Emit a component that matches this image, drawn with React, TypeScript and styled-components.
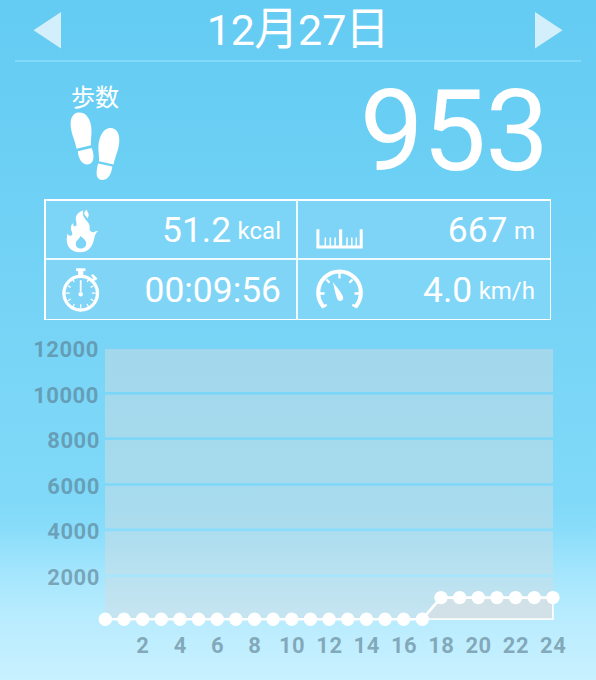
import React from "react";
import styled, { createGlobalStyle } from "styled-components";

const GlobalStyle = createGlobalStyle`
  *, *::before, *::after { box-sizing: border-box; }
  body { margin: 0; overflow: hidden; }
`;

const Screen = styled.main`
  width: 596px;
  height: 680px;
  display: flex;
  flex-direction: column;
  overflow: hidden;
  color: #fff;
  font-family: Roboto, "Noto Sans CJK JP", sans-serif;
  background: linear-gradient(
    180deg,
    #64cbf2 0px,
    #6bcff4 150px,
    #77d4f6 320px,
    #80d9f8 500px,
    #87dcfa 525px,
    #a2e5fd 570px,
    #b6ebfe 610px,
    #c9f1ff 680px
  );
`;

const DateBar = styled.header`
  display: flex;
  align-items: center;
  justify-content: space-between;
  height: 62px;
  margin: 0 15px;
  padding: 0 18px;
  border-bottom: 2px solid #80d9fb;
`;

const ArrowButton = styled.button`
  display: flex;
  padding: 0;
  border: 0;
  background: none;
  color: #d3effb;
`;

const DateTitle = styled.h1`
  margin: 0;
  font-size: 43px;
  font-weight: 400;
  line-height: 58px;
  white-space: nowrap;
`;

const Kanji = styled.span`
  display: inline-block;
  line-height: 50px;
  transform: translateY(-1px) scale(1.03, 1.06);
`;

const StepsRow = styled.section`
  display: flex;
  justify-content: space-between;
  height: 137px;
  padding: 20px 48px 0 70px;
`;

const StepsLabel = styled.div`
  display: flex;
  flex-direction: column;
  font-size: 24px;
  line-height: 30px;
`;

const LabelText = styled.span`
  height: 30px;
  padding: 1px 0 0 1px;
`;

const StepsValue = styled.div`
  margin-top: -17px;
  font-size: 113.5px;
  line-height: 134px;
  letter-spacing: -1px;
`;

const StatsGrid = styled.section`
  display: grid;
  grid-template-columns: 250px 252px;
  grid-template-rows: 57px 59px;
  gap: 2px;
  width: 507px;
  height: 121px;
  margin-left: 44px;
  border: 2px solid rgba(255, 255, 255, 0.93);
  background: rgba(255, 255, 255, 0.88);
`;

const StatCell = styled.div<{ $tone: string }>`
  display: flex;
  align-items: center;
  justify-content: space-between;
  padding: 0 15px 0 16px;
  background: ${(p) => p.$tone};
`;

const StatText = styled.div`
  display: flex;
  align-items: baseline;
  font-size: 35.4px;
  line-height: 42px;
  white-space: nowrap;
`;

const Unit = styled.span`
  margin: 0 0 0 6.5px;
  font-size: 24px;
  line-height: 24px;
  transform: translateY(-3.5px);
`;

const Chart = styled.svg`
  display: block;
  flex: 1;
  width: 596px;
  font-family: Roboto, sans-serif;
  font-size: 22px;
  font-weight: 700;
  letter-spacing: 0.5px;
`;

function Arrow({ flip }: { flip?: boolean }) {
  return (
    <svg width="28" height="37" viewBox="0 0 28 37" fill="currentColor">
      <path d={flip ? "M0 0 27.5 18.2 0 36.5Z" : "M28 0V36.5L.5 18.2Z"} />
    </svg>
  );
}

function Footprints() {
  return (
    <svg width="50" height="70" viewBox="0 0 50 70" fill="#fff">
      <path d="M8.5.6C15 .1 19 5 20.7 12C22.4 19 20.8 26 20.9 33.2L6.6 36.7C5.4 29.5.7 21 .6 12.5C.5 6 3.2.9 8.5.6Z" />
      <path d="M7.8 39.2 21.6 35.9C23.2 39 23.7 43 23.4 46C23 50 20.5 52.6 17 52.4C11.4 52.2 8.4 46 7.8 39.2Z" />
      <path d="M41.3 16C46.8 16.6 49.6 22 49.3 29C49.1 37 45 45 43.6 52.4L29 49.3C29.5 42.5 27.2 36 29.2 28.5C31.1 20.6 35.6 15.3 41.3 16Z" />
      <path d="M28.2 51.5 42.3 54.6C41.7 61 38.6 68.2 32.5 68C28.6 67.9 26.4 65 26.6 61C26.7 57.5 27.2 54.2 28.2 51.5Z" />
    </svg>
  );
}

function Flame() {
  return (
    <svg width="42" height="48" viewBox="0 1 42 48">
      <path
        fill="#fff"
        fillRule="evenodd"
        d="M21.3 5.3C19.7 10.8 23.3 14.2 26.1 17.5C27.9 20 28 22.5 27.5 24.5C28.7 27 30.5 27.8 32.2 26.9C33.6 26.1 34.7 25.7 36.2 26C33.9 27.7 33 29.8 32.3 33C30.8 41.5 26.7 47.1 18.2 47.2C9 47.3 4.7 41.4 4.7 34.8C4.7 32.6 5.6 31 4.9 28C5.9 29.8 7 31 8.6 30.8C10.6 30.6 10.8 28.5 9.6 26.2C8.2 23.4 8.6 20 11.2 18C10.9 21 12.4 21.9 13.8 21C15.7 19.6 13.7 16.6 13.8 13.4C14 9.7 16.9 7 21.3 5.3ZM18.3 31C17.7 34 13.8 35 13.8 39C13.8 41.8 16 43.6 19 43.6C22.2 43.6 24.4 41.3 24.2 38.1C24 34.8 20.7 33 18.3 31Z"
      />
      <path fill="#fff" d="M25 4.5C22.1 6.5 21.3 8.3 23 10.2C24 11.4 25 12 25.2 13.4C27.4 10.9 26.9 9 25.9 7.5C25.2 6.5 25 5.5 25 4.5Z" />
    </svg>
  );
}

function Stopwatch() {
  return (
    <svg width="42" height="48" viewBox="1.3 .3 42 48" fill="none" stroke="#fff">
      <circle cx="20" cy="27.5" r="16.8" strokeWidth="3.3" />
      <path d="M15.3 4H24.7" strokeWidth="2.8" />
      <path d="M20 4V10" strokeWidth="5.2" />
      <path d="M30.3 16.5 34 12.8" strokeWidth="2.6" />
      <path d="M31.2 9.2 35.8 13.8" strokeWidth="2.6" />
      <path d="M20 14.5V26" strokeWidth="1.8" />
      <path
        d="M20 38.5V42M5 27.5H9M31 27.5H35M11.5 12.9 13.5 16.2M28.5 12.9 26.5 16.2M7.2 20 10 21.7M32.8 20 30 21.7M7.2 35 10 33.3M32.8 35 30 33.3M11.5 42.1 13.7 38.3M28.5 42.1 26.3 38.3"
        strokeWidth="1.3"
      />
      <circle cx="20" cy="28.5" r="2.2" fill="#fff" stroke="none" />
    </svg>
  );
}

function Ruler() {
  return (
    <svg width="50" height="48" viewBox="-.5 0 50 48" fill="none" stroke="#fff">
      <path d="M3.4 23.3V41.1H46.7V23.3" strokeWidth="3" />
      <path d="M26.1 23.3V41" strokeWidth="3.2" />
      <path d="M10.8 31.5V41M15.8 31.5V41M20.6 31.5V41M32.5 31.5V41M37.3 31.5V41M41.8 31.5V41" strokeWidth="1.5" />
    </svg>
  );
}

function Gauge() {
  return (
    <svg width="50" height="48" viewBox="0 0 50 48" fill="none" stroke="#fff">
      <path d="M9.3 40.6A21.3 21.3 0 1 1 41.7 40.6" strokeWidth="4.1" />
      <path
        d="M25.5 6V12.5M12.5 13.5 15.6 16.7M38.5 13.5 35.4 16.7M5.5 27.5H10.5M45.5 27.5H40.5M8 41.5 12.7 38.8M43 41.5 38.3 38.8"
        strokeWidth="2.3"
      />
      <path d="M18.8 16C21.5 19.6 27.5 26.5 28.8 30.2C29.7 32.6 29 34 27.3 34.7C25.5 35.3 24 34.6 23.2 32.7C21.7 29.2 20 20.8 18.8 16Z" fill="#fff" stroke="none" />
    </svg>
  );
}

const stats = [
  { icon: <Flame />, value: "51.2", unit: "kcal", tone: "#7cd4f6" },
  { icon: <Ruler />, value: "667", unit: "m", tone: "#7dd4f6" },
  { icon: <Stopwatch />, value: "00:09:56", unit: "", tone: "#80d5f7" },
  { icon: <Gauge />, value: "4.0", unit: "km/h", tone: "#80d6f7" },
];

const LEFT = 105.3;
const STEP = 18.65;
const bands = [
  [29, 43],
  [74.7, 42.6],
  [120, 43.2],
  [165.8, 42.6],
  [211.2, 43.3],
  [257, 42],
];
const yLabels: [string, number, number][] = [
  ["12000", 37.4, 98.8],
  ["10000", 82.8, 98.8],
  ["8000", 128, 99.8],
  ["6000", 174, 99.8],
  ["4000", 219.2, 99.8],
  ["2000", 265, 99.8],
];
const points = Array.from({ length: 25 }, (_, hour) => ({
  x: LEFT + hour * STEP,
  y: hour < 18 ? 299.2 : 277.6,
}));
const line = points.map((p) => `${p.x} ${p.y}`).join("L");

function StepsChart() {
  return (
    <Chart viewBox="0 0 596 360">
      {bands.map(([y, height]) => (
        <rect key={y} x="105" y={y} width="448" height={height} fill="#d0dde2" fillOpacity="0.49" />
      ))}
      <path d={`M${line}L${points[24].x} 299.2Z`} fill="#dbdfe1" fillOpacity="0.6" />
      <path d={`M${LEFT} 299.2H${points[24].x}V277.6`} fill="none" stroke="#fff" strokeWidth="1.8" strokeOpacity="0.9" />
      <path d={`M${line}`} fill="none" stroke="#fff" strokeWidth="2.6" />
      {points.map((p) => (
        <circle key={p.x} cx={p.x} cy={p.y} r="6.7" fill="#fff" />
      ))}
      <g fill="#547385" fillOpacity="0.57">
        {yLabels.map(([label, y, x]) => (
          <text key={label} x={x} y={y} textAnchor="end">{label}</text>
        ))}
        {Array.from({ length: 12 }, (_, i) => (i + 1) * 2).map((hour) => (
          <text key={hour} x={LEFT + hour * STEP + 0.3} y="333" textAnchor="middle">{hour}</text>
        ))}
      </g>
    </Chart>
  );
}

export default function App() {
  return (
    <>
      <GlobalStyle />
      <Screen>
        <DateBar>
          <ArrowButton aria-label="前の日"><Arrow /></ArrowButton>
          <DateTitle>12<Kanji>月</Kanji>27<Kanji>日</Kanji></DateTitle>
          <ArrowButton aria-label="次の日"><Arrow flip /></ArrowButton>
        </DateBar>
        <StepsRow>
          <StepsLabel>
            <LabelText>歩数</LabelText>
            <Footprints />
          </StepsLabel>
          <StepsValue>953</StepsValue>
        </StepsRow>
        <StatsGrid>
          {stats.map((s) => (
            <StatCell key={s.value} $tone={s.tone}>
              {s.icon}
              <StatText>
                {s.value}
                {s.unit && <Unit>{s.unit}</Unit>}
              </StatText>
            </StatCell>
          ))}
        </StatsGrid>
        <StepsChart />
      </Screen>
    </>
  );
}
